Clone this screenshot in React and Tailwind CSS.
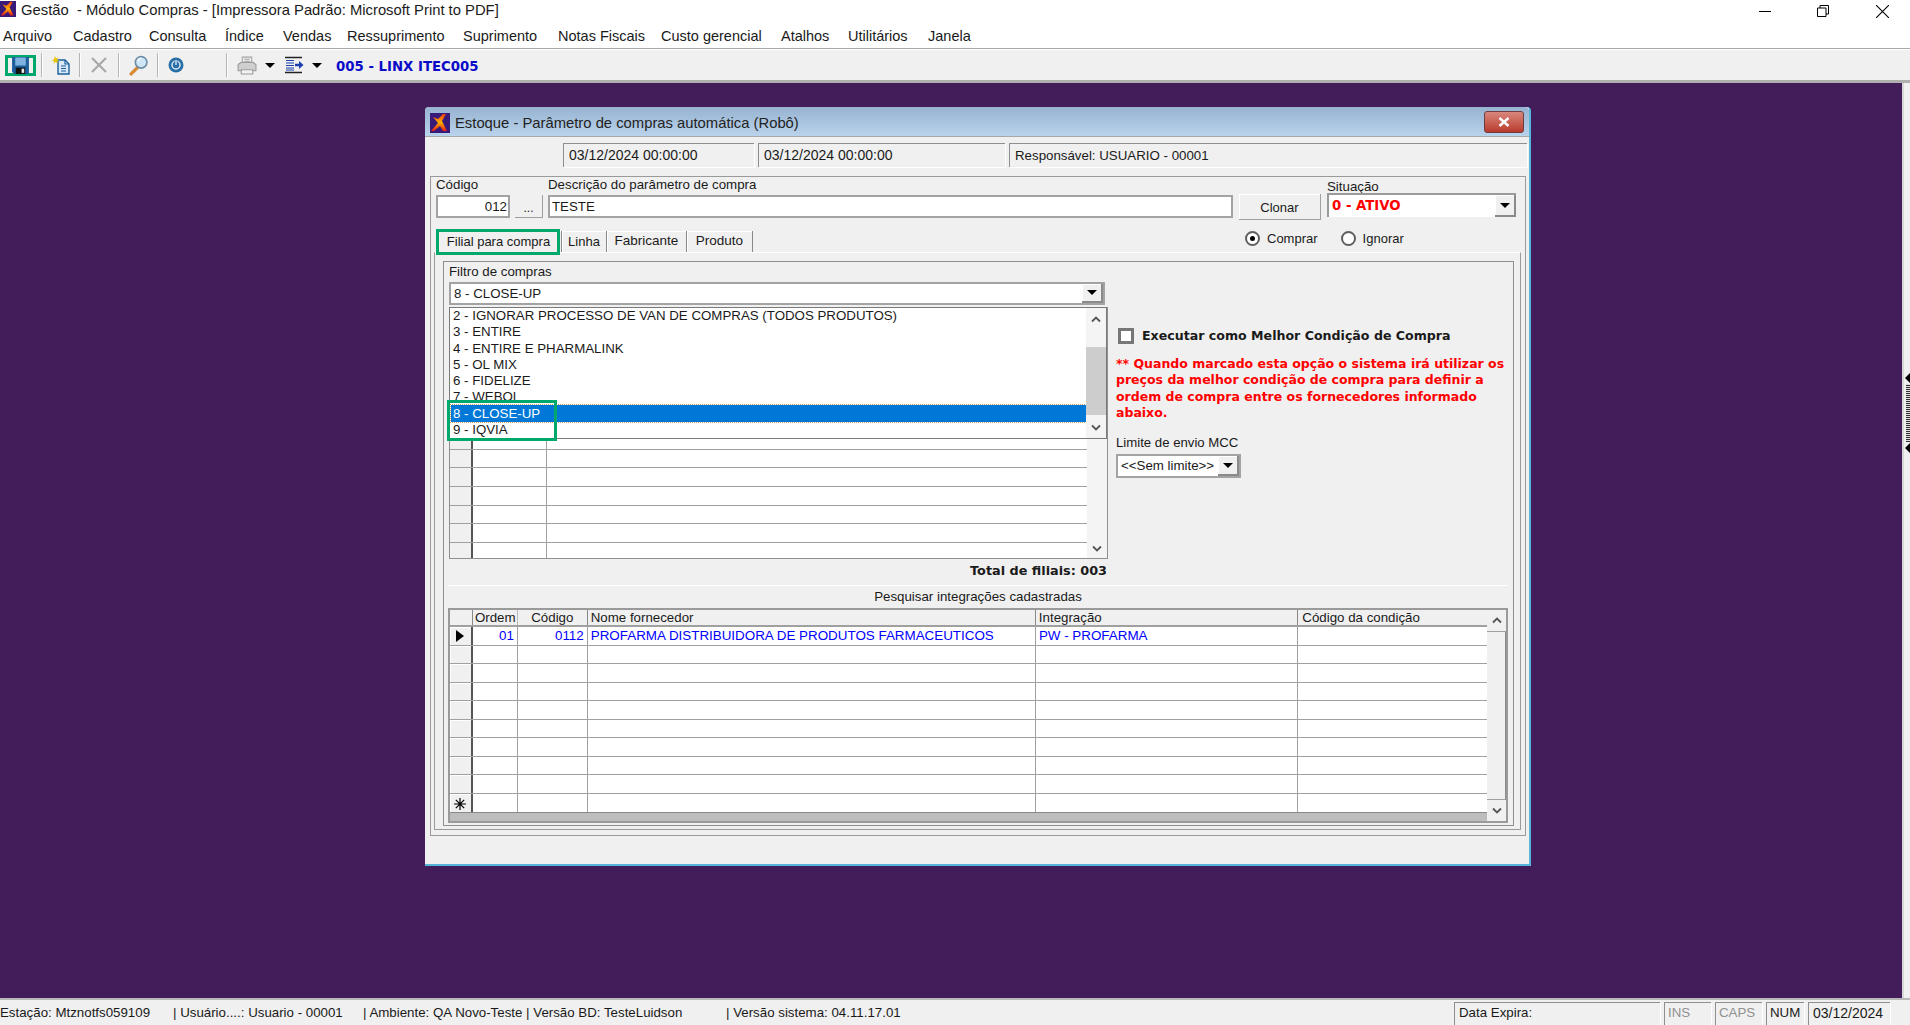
import React from "react";

const Logo = ({ className }) => (
  <svg viewBox="0 0 20 20" className={className}>
    <defs>
      <linearGradient id="lg" x1="0" y1="0" x2="0" y2="1">
        <stop offset="0" stopColor="#f03a10" />
        <stop offset="0.5" stopColor="#ffb000" />
        <stop offset="1" stopColor="#e81818" />
      </linearGradient>
    </defs>
    <rect width="20" height="20" fill="#3a1a78" />
    <path d="M13 1h3l-4 7 5 10h-4l-3-5-6 5H1l7-8-5-6 5 2z" fill="url(#lg)" />
  </svg>
);

const Save = () => (
  <svg viewBox="0 0 18 18" className="w-[19px] h-[19px]">
    <path d="M1 1h16v16H3l-2-2z" fill="#1c5f9c" />
    <rect x="4" y="1.500" width="10" height="7.500" fill="#7fb2de" />
    <rect x="4.500" y="11" width="9" height="6" fill="#111" />
    <rect x="10" y="12" width="2.500" height="4" fill="#e8e8e8" />
  </svg>
);

const NewDoc = () => (
  <svg viewBox="0 0 20 20" className="w-[20px] h-[20px]">
    <path d="M7 5h7l4 4v10H7z" fill="#dbeafa" stroke="#1c5f9c" strokeWidth="1.400" />
    <path d="M14 5v4h4" fill="none" stroke="#1c5f9c" strokeWidth="1.200" />
    <path d="M10 11h5M10 13.500h5M10 16h5" stroke="#1c5f9c" strokeWidth="1.200" />
    <path d="M4 1l1 2.500L7.500 2 6 4.500l2.500 1L6 6l1 2.500L4.500 7 2.500 8.500 3 6 .5 5.500 3 4.500z" fill="#e8c400" />
  </svg>
);

const Cross = () => (
  <svg viewBox="0 0 18 18" className="w-[18px] h-[18px]">
    <path d="M2 2l14 14M16 2L2 16" stroke="#a8a8a8" strokeWidth="2.200" fill="none" />
  </svg>
);

const Magnifier = () => (
  <svg viewBox="0 0 20 20" className="w-[21px] h-[21px]">
    <path d="M9 12l-6 6" stroke="#d88a35" strokeWidth="3.200" strokeLinecap="round" />
    <circle cx="12.500" cy="7" r="5.500" fill="#cfe6f7" stroke="#6d8ca8" strokeWidth="1.600" />
    <path d="M9.500 6a3.500 3.500 0 0 1 3-3" stroke="#fff" strokeWidth="1.200" fill="none" />
  </svg>
);

const Power = () => (
  <svg viewBox="0 0 16 16" className="w-[16px] h-[16px]">
    <circle cx="8" cy="8" r="7.500" fill="#2a6ea6" />
    <circle cx="8" cy="8" r="4" fill="none" stroke="#d7e8f5" strokeWidth="1.500" />
    <path d="M8 2.500v5" stroke="#2a6ea6" strokeWidth="3" />
    <path d="M8 3v5" stroke="#d7e8f5" strokeWidth="1.400" />
  </svg>
);

const Printer = () => (
  <svg viewBox="0 0 20 20" className="w-[21px] h-[21px]">
    <path d="M6 2h9v6H6z" fill="#eee" stroke="#a4a4a4" />
    <path d="M2 9l3-2h11l3 2v6H2z" fill="#cfcfcf" stroke="#9a9a9a" />
    <path d="M5 14h11v4H5z" fill="#f2f2f2" stroke="#9a9a9a" />
    <path d="M8 4h5M8 6h5" stroke="#a4a4a4" />
  </svg>
);

const AlignIcon = () => (
  <svg viewBox="0 0 19 18" className="w-[19px] h-[18px]">
    <path d="M0 1.500h17M0 16.500h17" stroke="#222" strokeWidth="1.300" />
    <path d="M1 4.500h8M1 7h8M1 9.500h8M1 12h8M1 14h8" stroke="#1b3fae" strokeWidth="1.200" />
    <path d="M10 7.800h4V5l4.500 4-4.500 4v-2.800h-4z" fill="#1b3fae" />
  </svg>
);

const Star = () => (
  <svg viewBox="0 0 12 12" className="w-[12px] h-[12px] mt-[2px]">
    <path d="M6 0v12M0 6h12M1.800 1.800l8.400 8.400M10.200 1.800l-8.400 8.400" stroke="#000" strokeWidth="1.200" />
  </svg>
);

const Caret = () => <span className="w-0 h-0 border-x-[5px] border-x-transparent border-t-[5px] border-t-black" />;

const Sep = ({ className }) => <span className={`block w-px h-[24px] bg-[#b4b4b4] shadow-[1px_0_0_#fff] ${className}`} />;

const ComboButton = ({ w = "w-[21px]" }) => (
  <span className={`${w} self-stretch flex items-center justify-center bg-[#f0f0f0] border-r-2 border-b-2 border-[#8a8a8a] shadow-[inset_1px_1px_0_#fff]`}>
    <Caret />
  </span>
);

const Chevron = ({ up }) => (
  <svg viewBox="0 0 10 7" className="w-[10px] h-[7px]">
    <path d={up ? "M1 5.500l4-4 4 4" : "M1 1.500l4 4 4-4"} fill="none" stroke="#555" strokeWidth="1.800" />
  </svg>
);

const menus = [
  ["Arquivo", "w-[70px]"],
  ["Cadastro", "w-[76px]"],
  ["Consulta", "w-[76px]"],
  ["Índice", "w-[58px]"],
  ["Vendas", "w-[64px]"],
  ["Ressuprimento", "w-[116px]"],
  ["Suprimento", "w-[95px]"],
  ["Notas Fiscais", "w-[103px]"],
  ["Custo gerencial", "w-[120px]"],
  ["Atalhos", "w-[67px]"],
  ["Utilitários", "w-[80px]"],
  ["Janela", "w-[50px]"],
];

const listItems = [
  "2 - IGNORAR PROCESSO DE VAN DE COMPRAS (TODOS PRODUTOS)",
  "3 - ENTIRE",
  "4 - ENTIRE E PHARMALINK",
  "5 - OL MIX",
  "6 - FIDELIZE",
  "7 - WEBOL",
];

const GreenBox = ({ className }) => (
  <div className={`absolute border-[3px] border-[#00a86b] pointer-events-none ${className}`} />
);

const Tab = ({ w, size = "text-[13px]", children }) => (
  <div className={`${w} ${size} h-full flex items-center justify-center border-r border-r-[#8a8a8a] shadow-[inset_1px_1px_0_#fff]`}>
    {children}
  </div>
);

const Sunken = ({ className = "", children }) => (
  <div className={`border-l border-t border-[#8f8f8f] shadow-[1px_1px_0_#fff] flex items-center ${className}`}>{children}</div>
);

const Input = ({ className = "", children }) => (
  <div className={`h-[23px] bg-white border-2 border-[#a3a3a3] flex items-center text-[13.3px] ${className}`}>{children}</div>
);

const upperRows = Array.from({ length: 13 });
const lowerRows = Array.from({ length: 8 });

const gridCols = ["w-[45px]", "w-[70px]", "w-[449px]", "w-[263px]", "w-[189px]"];

const LowerRow = ({ mark, cells = [], last }) => (
  <div className={`flex h-[18.7px] ${last ? "" : "border-b border-b-[#a0a0a0]"}`}>
    <div className="w-[23px] bg-[#f0f0f0] border-r-2 border-r-[#555] flex items-center justify-center shadow-[inset_1px_1px_0_#fff]">{mark}</div>
    {gridCols.map((w, i) => (
      <div key={w} className={`${w} ${i < 4 ? "border-r border-r-[#a0a0a0]" : ""} flex items-center text-[13.4px] text-[#0000ff] px-[3px] whitespace-nowrap ${i < 2 ? "justify-end" : ""}`}>
        {cells[i]}
      </div>
    ))}
  </div>
);

export default function App() {
  return (
    <div className="w-[1910px] h-[1025px] flex flex-col overflow-hidden bg-[#f0f0f0] text-[#1a1a1a] font-['Liberation_Sans',sans-serif]">
      <div className="h-[22px] bg-white flex items-center relative shrink-0">
        <Logo className="w-[16px] h-[18px] absolute left-0 top-0" />
        <span className="ml-[21px] mb-[2px] text-[14.8px] whitespace-pre">Gestão  - Módulo Compras - [Impressora Padrão: Microsoft Print to PDF]</span>
        <div className="ml-auto flex items-center h-full">
          <span className="w-[12px] h-px bg-black mr-[46px]" />
          <svg viewBox="0 0 12 12" className="w-[12px] h-[12px] mr-[47px]">
            <path d="M.5 3h8.500v8.500H.5zM3 3V.5h8.500V9H9" fill="none" stroke="#000" />
          </svg>
          <svg viewBox="0 0 12 12" className="w-[13px] h-[13px] mr-[21px]">
            <path d="M0 0l12 12M12 0L0 12" stroke="#000" />
          </svg>
        </div>
      </div>

      <div className="h-[27px] bg-white flex items-center pl-[3px] pt-[3px] text-[14.5px] shrink-0 border-b border-b-[#a8a8a8]">
        {menus.map(([m, w]) => (
          <span key={m} className={`${w} whitespace-nowrap`}>{m}</span>
        ))}
      </div>

      <div className="h-[34px] shrink-0 flex items-center border-t border-t-white border-b-[3px] border-b-[#b0b0b0] relative">
        <div className="w-[31px] h-[21px] ml-[5px] border-[3px] border-[#00a86b] flex items-center justify-center">
          <Save />
        </div>
        <Sep className="ml-[5px]" />
        <span className="ml-[9px]"><NewDoc /></span>
        <Sep className="ml-[8px]" />
        <span className="ml-[10px]"><Cross /></span>
        <Sep className="ml-[10px]" />
        <span className="ml-[9px]"><Magnifier /></span>
        <Sep className="ml-[8px]" />
        <span className="ml-[10px]"><Power /></span>
        <Sep className="ml-[42px]" />
        <span className="ml-[9px]"><Printer /></span>
        <span className="ml-[8px] flex"><Caret /></span>
        <span className="ml-[10px]"><AlignIcon /></span>
        <span className="ml-[8px] flex"><Caret /></span>
        <span className="ml-[14px] mt-[3px] text-[13.3px] font-bold text-[#0a0ac8] font-['DejaVu_Sans',sans-serif] whitespace-nowrap">005 - LINX ITEC005</span>
      </div>

      <div className="flex-1 flex min-h-0">
        <div className="flex-1 bg-[#431c5a] relative">
          <div className="absolute left-[425px] top-[24px] w-[1106px] h-[759px] bg-[#f0f0f0] border-r-2 border-b-2 border-r-[#58b4d8] border-b-[#58b4d8] rounded-t-[4px] flex flex-col">
            <div className="h-[30px] shrink-0 flex items-center bg-gradient-to-b from-[#97b3d0] to-[#bad3ec] rounded-t-[4px] border-b border-b-[#a8a8a8]">
              <Logo className="w-[20px] h-[20px] ml-[5px] mt-[2px]" />
              <span className="ml-[5px] mt-[3px] text-[14.8px] text-[#222]">Estoque - Parâmetro de compras automática (Robô)</span>
              <div className="ml-auto mr-[5px] w-[40px] h-[22px] rounded-[3px] border border-[#6f3f3f] bg-gradient-to-b from-[#d9877d] to-[#b8392c] flex items-center justify-center">
                <svg viewBox="0 0 12 10" className="w-[12px] h-[10px]">
                  <path d="M1.500 1l9 8M10.500 1l-9 8" stroke="#fff" strokeWidth="2.400" />
                </svg>
              </div>
            </div>

            <div className="mt-[6px] h-[24px] flex gap-[4px] pl-[138px] shrink-0">
              <Sunken className="w-[191px] pl-[5px] text-[14px]">03/12/2024 00:00:00</Sunken>
              <Sunken className="w-[247px] pl-[5px] text-[14px]">03/12/2024 00:00:00</Sunken>
              <Sunken className="w-[518px] pl-[5px] text-[13.3px]">Responsável: USUARIO - 00001</Sunken>
            </div>

            <div className="mt-[9px] ml-[5px] w-[1096px] h-[660px] border border-[#9a9a9a] flex flex-col shrink-0">
              <div className="flex pl-[5px] h-[43px] shrink-0 text-[13.3px]">
                <div className="w-[74px] flex flex-col">
                  <span className="h-[18px] leading-[16px]">Código</span>
                  <Input className="justify-end pr-[1px]">012</Input>
                </div>
                <div className="ml-[5px] mt-[18px] w-[28px] h-[23px] flex items-end justify-center border-r border-b border-[#a0a0a0] text-[12px] leading-[18px]">...</div>
                <div className="ml-[5px] w-[685px] flex flex-col">
                  <span className="h-[18px] leading-[16px]">Descrição do parâmetro de compra</span>
                  <Input className="pl-[2px]">TESTE</Input>
                </div>
                <div className="ml-[6px] mt-[17px] w-[82px] h-[26px] pt-[2px] flex items-center justify-center border-r border-b border-[#a0a0a0] shadow-[inset_1px_1px_0_#fff] text-[13px]">Clonar</div>
                <div className="ml-[6px] w-[189px] flex flex-col">
                  <span className="h-[16px] leading-[19px]">Situação</span>
                  <div className="h-[24px] bg-white border-l-2 border-t-2 border-[#9a9a9a] flex items-center">
                    <span className="flex-1 pl-[3px] text-[13.3px] font-bold text-[#ff0000] font-['DejaVu_Sans',sans-serif]">0 - ATIVO</span>
                    <ComboButton />
                  </div>
                </div>
              </div>

              <div className="mt-[11px] h-[21px] flex items-center pl-[5px] shrink-0 relative">
                <Tab w="w-[126px]">Filial para compra</Tab>
                <Tab w="w-[45px]">Linha</Tab>
                <Tab w="w-[80px]" size="text-[13.5px]">Fabricante</Tab>
                <Tab w="w-[66px]" size="text-[13.5px]">Produto</Tab>
                <span className="ml-[492px] mb-[6px] w-[15px] h-[15px] rounded-full border-2 border-[#5f5f5f] bg-white flex items-center justify-center">
                  <span className="w-[5px] h-[5px] rounded-full bg-black" />
                </span>
                <span className="ml-[7px] mb-[6px] text-[13px]">Comprar</span>
                <span className="ml-[23px] mb-[6px] w-[15px] h-[15px] rounded-full border-2 border-[#5f5f5f] bg-white" />
                <span className="ml-[7px] mb-[6px] text-[13px]">Ignorar</span>
                <GreenBox className="left-[5px] top-[-2px] w-[124px] h-[26px]" />
              </div>

              <div className="ml-[3px] w-[1087px] h-[578px] border-x border-b border-[#9a9a9a] border-t border-t-white pl-[8px] pt-[8px] shrink-0">
                <div className="w-[1071px] h-[565px] border border-[#8f8f8f] flex flex-col">
                  <div className="flex h-[323px] shrink-0">
                    <div className="ml-[5px] mt-[1px] w-[659px] flex flex-col relative">
                      <span className="h-[19px] text-[13.3px] leading-[17px]">Filtro de compras</span>
                      <div className="h-[23px] w-[656px] bg-white border-2 border-[#a3a3a3] flex items-center text-[13.3px] shrink-0">
                        <span className="flex-1 pl-[3px]">8 - CLOSE-UP</span>
                        <ComboButton />
                      </div>
                      <div className="mt-[2px] h-[252px] border border-[#8f8f8f] flex shrink-0 bg-white">
                        <div className="w-[637px] flex flex-col justify-end overflow-hidden">
                          {upperRows.map((_, i) => (
                            <div key={i} className={`flex shrink-0 ${i === 12 ? "h-[15px]" : "h-[18.7px] border-b border-b-[#a0a0a0]"}`}>
                              <div className="w-[23px] bg-[#f0f0f0] border-r-2 border-r-[#555]" />
                              <div className="w-[74px] border-r border-r-[#a0a0a0]" />
                            </div>
                          ))}
                        </div>
                        <div className="flex-1 bg-[#f4f4f4] flex items-end justify-center pb-[6px]">
                          <Chevron />
                        </div>
                      </div>
                      <div className="h-[23px] flex items-center justify-end text-[12.8px] font-bold font-['DejaVu_Sans',sans-serif] pr-[1px] whitespace-nowrap">Total de filiais: 003</div>

                      <div className="absolute left-0 top-[44px] w-[658px] h-[132px] bg-white border border-[#7a7a7a] flex overflow-hidden">
                        <div className="w-[636px] relative text-[13.3px] pl-[3px]">
                          {listItems.map((t) => (
                            <div key={t} className="h-[16.3px] leading-[16.3px] whitespace-nowrap">{t}</div>
                          ))}
                          <div className="absolute left-[1px] right-0 top-[97px] h-[17px] bg-[#0078d7] text-white pl-[2px] leading-[17px] outline-1 outline-dotted outline-[#d59a5a]">8 - CLOSE-UP</div>
                          <div className="absolute left-[3px] top-[114px] h-[16px] leading-[16px]">9 - IQVIA</div>
                        </div>
                        <div className="flex-1 bg-[#f4f4f4] flex flex-col items-center relative">
                          <span className="h-[22px] flex items-center"><Chevron up /></span>
                          <span className="w-full h-[68px] mt-[17px] bg-[#cdcdcd]" />
                          <span className="mt-auto h-[22px] flex items-center"><Chevron /></span>
                        </div>
                      </div>
                      <GreenBox className="left-[-2px] top-[137px] w-[110px] h-[41px]" />
                    </div>

                    <div className="ml-[8px] flex-1 flex flex-col items-start">
                      <div className="mt-[65px] flex items-center h-[18px]">
                        <span className="ml-[2px] w-[16px] h-[16px] border-[3px] border-[#777] bg-white" />
                        <span className="ml-[8px] text-[12.6px] font-bold font-['DejaVu_Sans',sans-serif] whitespace-nowrap">Executar como Melhor Condição de Compra</span>
                      </div>
                      <p className="mt-[11px] w-[392px] text-[12.5px] leading-[16.3px] font-bold text-[#ff0000] font-['DejaVu_Sans',sans-serif]">
                        ** Quando marcado esta opção o sistema irá utilizar os preços da melhor condição de compra para definir a ordem de compra entre os fornecedores informado abaixo.
                      </p>
                      <span className="mt-[13px] text-[13.2px] leading-[17px]">Limite de envio MCC</span>
                      <div className="mt-[3px] w-[125px] h-[24px] bg-white border-2 border-[#a3a3a3] flex items-center text-[13.3px] whitespace-nowrap">
                        <span className="flex-1 pl-[3px]">&lt;&lt;Sem limite&gt;&gt;</span>
                        <ComboButton />
                      </div>
                    </div>
                  </div>

                  <div className="ml-[4px] w-[1060px] h-[23px] flex items-center justify-center text-[13.3px] border-t border-t-white shrink-0">Pesquisar integrações cadastradas</div>

                  <div className="ml-[4px] w-[1060px] h-[215px] border-2 border-[#9a9a9a] flex shrink-0 bg-white">
                    <div className="w-[1037px] flex flex-col">
                      <div className="h-[17px] flex bg-[#f0f0f0] border-b-2 border-b-[#a0a0a0] text-[13.3px] shrink-0">
                        <div className="w-[23px] border-r border-r-[#888]" />
                        <div className="w-[45px] border-r border-r-[#bbb] pl-[2px] flex items-center">Ordem</div>
                        <div className="w-[70px] border-r border-r-[#888] flex items-center justify-center">Código</div>
                        <div className="w-[449px] border-r border-r-[#888] pl-[3px] flex items-center">Nome fornecedor</div>
                        <div className="w-[263px] border-r border-r-[#888] pl-[3px] flex items-center">Integração</div>
                        <div className="w-[189px] pl-[4px] flex items-center">Código da condição</div>
                      </div>
                      <LowerRow
                        mark={<span className="w-0 h-0 border-y-[6px] border-y-transparent border-l-[8px] border-l-black" />}
                        cells={["01", "0112", "PROFARMA DISTRIBUIDORA DE PRODUTOS FARMACEUTICOS", "PW - PROFARMA", ""]}
                      />
                      {lowerRows.map((_, i) => (
                        <LowerRow key={i} />
                      ))}
                      <LowerRow mark={<Star />} last />
                      <div className="mt-auto h-[9px] bg-[#bdbdbd] border-t border-t-[#8a8a8a]" />
                    </div>
                    <div className="flex-1 bg-[#f0f0f0] flex flex-col items-center">
                      <span className="h-[21px] flex items-center"><Chevron up /></span>
                      <span className="flex-1 w-full border-y border-[#a0a0a0] border-r border-r-[#8a8a8a]" />
                      <span className="h-[21px] flex items-center"><Chevron /></span>
                    </div>
                  </div>
                </div>
              </div>
            </div>
          </div>
        </div>
        <div className="w-[8px] bg-[#f0f0f0] border-l-2 border-l-[#d8d8d8] flex flex-col items-end pt-[290px]">
          <span className="w-0 h-0 border-y-[5px] border-y-transparent border-r-[5px] border-r-black" />
          <span className="w-[4px] h-[58px] my-[1px] bg-[repeating-linear-gradient(0deg,#333_0_1px,#ddd_1px_2px)]" />
          <span className="w-0 h-0 border-y-[5px] border-y-transparent border-r-[5px] border-r-black" />
        </div>
      </div>

      <div className="h-[27px] shrink-0 border-t-2 border-t-[#b8b8b8] flex items-end text-[13.3px] whitespace-nowrap">
        <div className="h-[23px] pb-[2px] flex items-center">
          <span className="w-[173px]">Estação: Mtznotfs059109</span>
          <span className="w-[190px]">| Usuário....: Usuario - 00001</span>
          <span className="w-[363px]">| Ambiente: QA Novo-Teste | Versão BD: TesteLuidson</span>
          <span>| Versão sistema: 04.11.17.01</span>
        </div>
        <div className="ml-auto mr-[20px] flex gap-[4px] h-[23px]">
          <Sunken className="w-[206px] pl-[4px] pb-[2px]">Data Expira:</Sunken>
          <Sunken className="w-[47px] pl-[3px] pb-[2px] text-[#909090]">INS</Sunken>
          <Sunken className="w-[47px] pl-[3px] pb-[2px] text-[#909090]">CAPS</Sunken>
          <Sunken className="w-[38px] pl-[3px] pb-[2px]">NUM</Sunken>
          <Sunken className="w-[82px] pl-[4px] pb-[2px] text-[14px]">03/12/2024</Sunken>
        </div>
      </div>
    </div>
  );
}
